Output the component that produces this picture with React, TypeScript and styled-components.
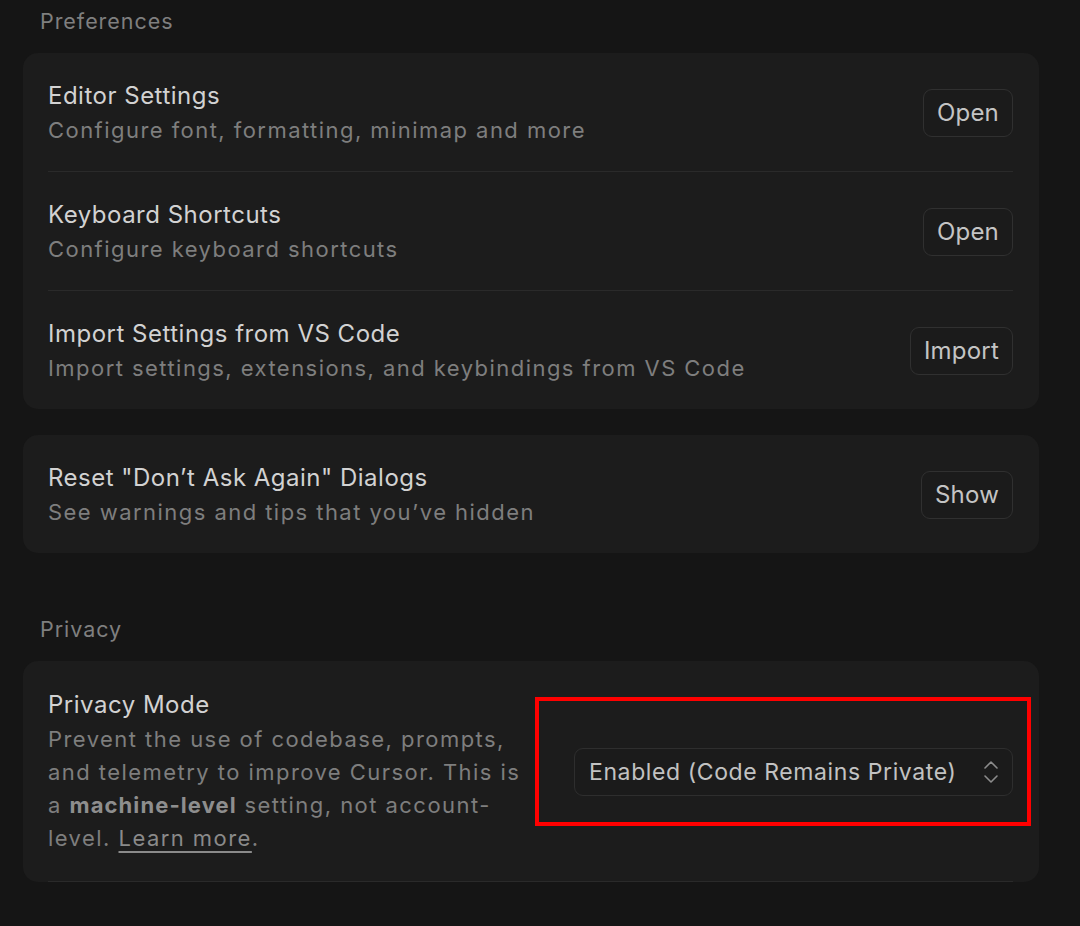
import React from "react";
import styled, { createGlobalStyle } from "styled-components";

const Global = createGlobalStyle`
  html, body { margin: 0; padding: 0; background: #151515; }
  body { font-family: Inter, "Noto Sans", "Liberation Sans", sans-serif; -webkit-font-smoothing: antialiased; }
`;

const Page = styled.div`
  box-sizing: border-box;
  width: 1080px;
  min-height: 926px;
  padding: 6px 41px 40px 23px;
  display: flex;
  flex-direction: column;
`;

const Section = styled.section<{ $top?: number }>`
  display: flex;
  flex-direction: column;
  gap: 16px;
  margin-top: ${(p) => p.$top ?? 0}px;
`;

const SectionLabel = styled.div`
  padding-left: 17px;
  font-size: 21.5px;
  line-height: 31px;
  letter-spacing: 0.95px;
  color: #7f7f7f;
`;

const Cards = styled.div`
  display: flex;
  flex-direction: column;
  gap: 26px;
`;

const Card = styled.div`
  position: relative;
  background: #1c1c1c;
  border-radius: 15px;
  padding: 0 26px 0 25px;
`;

const Row = styled.div`
  display: flex;
  align-items: center;
  justify-content: space-between;
  padding: 26px 0 24px;
  border-bottom: 1px solid #2a2a2a;
  &:last-child { border-bottom: none; padding-bottom: 24px; }
`;

const PrivacyRow = styled(Row)`
  padding: 27px 0 26px;
  &:last-child { padding-bottom: 26px; }
`;

const TextCol = styled.div<{ $width?: number }>`
  display: flex;
  flex-direction: column;
  gap: 1px;
  ${(p) => (p.$width ? `width: ${p.$width}px;` : "")}
`;

const Title = styled.div`
  font-size: 24px;
  line-height: 34px;
  letter-spacing: 0.5px;
  color: #d2d2d2;
`;

const Desc = styled.div`
  font-size: 22px;
  line-height: 33px;
  letter-spacing: 1.45px;
  color: #7e7e7e;
  b { font-weight: 700; color: #8e8e8e; letter-spacing: 1.1px; }
  a {
    color: #8a8a8a;
    text-decoration: underline;
    text-underline-offset: 5px;
    text-decoration-thickness: 2px;
  }
`;

const Button = styled.button`
  box-sizing: border-box;
  height: 48px;
  padding: 0 13px;
  border: 1.5px solid #303030;
  border-radius: 9px;
  background: #1b1b1b;
  color: #c4c4c4;
  font-family: inherit;
  font-size: 24px;
  letter-spacing: 0.2px;
  line-height: 1;
`;

const Select = styled.div`
  box-sizing: border-box;
  width: 439px;
  height: 48px;
  display: flex;
  align-items: center;
  justify-content: space-between;
  padding: 0 12px 0 14px;
  border: 1.5px solid #2e2e2e;
  border-radius: 9px;
  background: #1b1b1b;
  color: #c2c2c2;
  font-size: 23px;
  letter-spacing: 0.6px;
`;

const Highlight = styled.div`
  position: absolute;
  left: 512px;
  top: 36px;
  width: 496px;
  height: 129px;
  box-sizing: border-box;
  border: 4px solid #ff0000;
  pointer-events: none;
`;

const Chevrons = () => (
  <svg width="18" height="26" viewBox="0 0 18 26" fill="none" stroke="#8c8c8c" strokeWidth="1.6" strokeLinecap="round" strokeLinejoin="round">
    <path d="M3 9 L9 3 L15 9" />
    <path d="M3 17 L9 23 L15 17" />
  </svg>
);

const prefs = [
  { title: "Editor Settings", desc: "Configure font, formatting, minimap and more", action: "Open" },
  { title: "Keyboard Shortcuts", desc: "Configure keyboard shortcuts", action: "Open" },
  { title: "Import Settings from VS Code", desc: "Import settings, extensions, and keybindings from VS Code", action: "Import" },
];

export default function App() {
  return (
    <>
      <Global />
      <Page>
        <Section>
          <SectionLabel>Preferences</SectionLabel>
          <Cards>
            <Card>
              {prefs.map((p) => (
                <Row key={p.title}>
                  <TextCol>
                    <Title>{p.title}</Title>
                    <Desc>{p.desc}</Desc>
                  </TextCol>
                  <Button>{p.action}</Button>
                </Row>
              ))}
            </Card>
            <Card>
              <Row>
                <TextCol>
                  <Title>Reset "Don’t Ask Again" Dialogs</Title>
                  <Desc>See warnings and tips that you’ve hidden</Desc>
                </TextCol>
                <Button>Show</Button>
              </Row>
            </Card>
          </Cards>
        </Section>
        <Section $top={61}>
          <SectionLabel>Privacy</SectionLabel>
          <Card>
            <PrivacyRow>
              <TextCol $width={478}>
                <Title>Privacy Mode</Title>
                <Desc>
                  Prevent the use of codebase, prompts, and telemetry to improve Cursor. This is a{" "}
                  <b>machine-level</b> setting, not account-level. <a>Learn more</a>.
                </Desc>
              </TextCol>
              <Select>
                <span>Enabled (Code Remains Private)</span>
                <Chevrons />
              </Select>
            </PrivacyRow>
            <Highlight />
          </Card>
        </Section>
      </Page>
    </>
  );
}
